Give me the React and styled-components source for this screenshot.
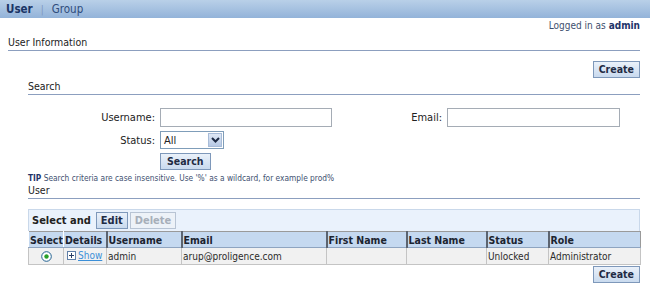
import styled, { createGlobalStyle } from 'styled-components';

const GlobalStyle = createGlobalStyle`
    body {
        margin: 0;
        background: #ffffff;
        font-family: "DejaVu Sans Condensed", "Liberation Sans", sans-serif;
        font-size: 10.5px;
        color: #222222;
    }
`;

const columns = [
    { key: 'select', label: 'Select', width: 35, plain: true },
    { key: 'details', label: 'Details', width: 43, plain: true },
    { key: 'username', label: 'Username', width: 75 },
    { key: 'email', label: 'Email', width: 145 },
    { key: 'first', label: 'First Name', width: 80 },
    { key: 'last', label: 'Last Name', width: 80 },
    { key: 'status', label: 'Status', width: 62 },
    { key: 'role', label: 'Role', width: 92 },
];

const App = () => {
    return (
        <Page>
            <GlobalStyle />
            <NavBar>
                <NavItem active>User</NavItem>
                <NavSep>|</NavSep>
                <NavItem>Group</NavItem>
            </NavBar>
            <Content>
                <LoggedIn>Logged in as <b>admin</b></LoggedIn>
                <SectionHeader top={3}>User Information</SectionHeader>
                <ButtonRow>
                    <Button>Create</Button>
                </ButtonRow>
                <Inner>
                    <SectionHeader top={2}>Search</SectionHeader>
                    <SearchGrid>
                        <Label>Username:</Label>
                        <TextInput />
                        <Label>Email:</Label>
                        <TextInput />
                        <Label>Status:</Label>
                        <Select>
                            <span>All</span>
                            <SelectArrow>
                                <svg width="9" height="6" viewBox="0 0 9 6">
                                    <path d="M1 1 L4.5 4.5 L8 1" fill="none" stroke="#1d2a44" strokeWidth="2" />
                                </svg>
                            </SelectArrow>
                        </Select>
                        <span />
                        <span />
                        <span />
                        <div><Button wide>Search</Button></div>
                    </SearchGrid>
                    <Tip><b>TIP</b> Search criteria are case insensitive. Use '%' as a wildcard, for example prod%</Tip>
                    <SectionHeader top={0}>User</SectionHeader>
                    <TableWrap>
                        <Toolbar>
                            <ToolbarTitle>Select and</ToolbarTitle>
                            <Button small>Edit</Button>
                            <Button small disabled>Delete</Button>
                        </Toolbar>
                        <Table>
                            <colgroup>
                                {columns.map((c) => <col key={c.key} style={{ width: c.width }} />)}
                            </colgroup>
                            <thead>
                                <tr>
                                    {columns.map((c) => <Th key={c.key} plain={c.plain}>{c.label}</Th>)}
                                </tr>
                            </thead>
                            <tbody>
                                <tr>
                                    <Td center>
                                        <Radio>
                                            <svg width="11" height="11" viewBox="0 0 11 11">
                                                <circle cx="5.5" cy="5.5" r="4.8" fill="#ffffff" stroke="#1f5f8f" strokeWidth="1" />
                                                <circle cx="5.5" cy="5.5" r="2.2" fill="#2aa02a" />
                                            </svg>
                                        </Radio>
                                    </Td>
                                    <Td>
                                        <ShowLink>
                                            <svg width="9" height="9" viewBox="0 0 9 9">
                                                <rect x="0.5" y="0.5" width="8" height="8" fill="#ffffff" stroke="#5f7fa8" />
                                                <path d="M2 4.5 H7 M4.5 2 V7" stroke="#2a3f66" strokeWidth="1" />
                                            </svg>
                                            <u>Show</u>
                                        </ShowLink>
                                    </Td>
                                    <Td>admin</Td>
                                    <Td>arup@proligence.com</Td>
                                    <Td />
                                    <Td />
                                    <Td>Unlocked</Td>
                                    <Td>Administrator</Td>
                                </tr>
                            </tbody>
                        </Table>
                    </TableWrap>
                    <ButtonRow tight>
                        <Button>Create</Button>
                    </ButtonRow>
                </Inner>
            </Content>
        </Page>
    );
};

const Page = styled.div`
    width: 650px;
    height: 284px;
    overflow: hidden;
`;

const NavBar = styled.div`
    height: 18px;
    display: flex;
    align-items: center;
    gap: 8px;
    padding-left: 6px;
    background: linear-gradient(#b9d0e8, #93b3d9);
    font-size: 11.5px;
`;

const NavItem = styled.span`
    color: ${(p) => (p.active ? '#1b3566' : '#2f4c7c')};
    font-weight: ${(p) => (p.active ? 'bold' : 'normal')};
`;

const NavSep = styled.span`
    color: #7d98bf;
    font-size: 10px;
`;

const Content = styled.div`
    padding: 0 10px 0 8px;
`;

const LoggedIn = styled.div`
    text-align: right;
    color: #3d4f6e;
    margin-top: 1px;
    height: 14px;
    line-height: 14px;
    font-size: 10px;

    b {
        color: #1f3468;
    }
`;

const SectionHeader = styled.div`
    color: #222222;
    line-height: 13px;
    margin-top: ${(p) => p.top}px;
    padding-bottom: 1px;
    border-bottom: 1px solid #8c9fbf;
`;

const ButtonRow = styled.div`
    display: flex;
    justify-content: flex-end;
    padding-top: ${(p) => (p.tight ? '1px' : '10px')};
`;

const Button = styled.button`
    font-family: inherit;
    font-size: ${(p) => (p.small ? '11px' : '10.5px')};
    font-weight: bold;
    color: ${(p) => (p.disabled ? '#a7afba' : '#1f2b44')};
    background: ${(p) => (p.disabled ? '#edf2f8' : 'linear-gradient(#eaf1fa, #c9daee)')};
    border: 1px solid ${(p) => (p.disabled ? '#b8c4d4' : '#7e98ba')};
    padding: 0 ${(p) => (p.small ? '4px' : p.wide ? '6px' : '5px')};
    height: 17px;
    line-height: 15px;
    margin: 0;
`;

const Inner = styled.div`
    padding-left: 20px;
`;

const SearchGrid = styled.div`
    display: grid;
    grid-template-columns: 127px 172px 105px 173px;
    column-gap: 5px;
    row-gap: 4px;
    align-items: center;
    margin-top: 13px;
`;

const Label = styled.span`
    text-align: right;
    font-size: 11px;
`;

const TextInput = styled.input`
    height: 19px;
    box-sizing: border-box;
    border: 1px solid #a5acb5;
    margin: 0;
    padding: 0;
`;

const Select = styled.div`
    width: 64px;
    height: 18px;
    box-sizing: border-box;
    border: 1px solid #7f9db9;
    display: flex;
    align-items: center;
    justify-content: space-between;
    padding-left: 3px;
    font-size: 11px;
`;

const SelectArrow = styled.span`
    width: 14px;
    height: 14px;
    margin-right: 1px;
    display: flex;
    align-items: center;
    justify-content: center;
    background: linear-gradient(#dfe8f5, #b6c8e4);
    border: 1px solid #a8bcd8;
    box-sizing: border-box;
`;

const Tip = styled.div`
    font-size: 8.3px;
    color: #3e5070;
    margin-top: 2px;
    line-height: 12px;

    b {
        color: #1f3468;
    }
`;

const TableWrap = styled.div`
    margin-top: 10px;
`;

const Toolbar = styled.div`
    height: 22px;
    box-sizing: border-box;
    display: flex;
    align-items: center;
    gap: 2px;
    padding-left: 3px;
    background: #eaf2fc;
    border: 1px solid #c9d8ea;
    border-bottom: none;
`;

const ToolbarTitle = styled.span`
    font-size: 11px;
    font-weight: bold;
    color: #222222;
    margin-right: 3px;
`;

const Table = styled.table`
    width: 100%;
    table-layout: fixed;
    border-collapse: collapse;
    border: 1px solid #9a9a9a;
`;

const Th = styled.th`
    height: 15px;
    padding: 0 1px;
    text-align: left;
    font-size: 10.5px;
    font-weight: bold;
    color: #1c2430;
    background: #c5d9f0;
    border-left: ${(p) => (p.plain ? '1px solid #ffffff' : '2px solid #5c6470')};
    border-bottom: 1px solid #8ea4c0;
    white-space: nowrap;
    overflow: hidden;
`;

const Td = styled.td`
    height: 16px;
    padding: 0 1px;
    background: #f1f1f1;
    border: 1px solid #c4c4c4;
    text-align: ${(p) => (p.center ? 'center' : 'left')};
    font-size: 10px;
    color: #2b2b2b;
    white-space: nowrap;
    overflow: hidden;
`;

const Radio = styled.span`
    display: inline-flex;
    vertical-align: middle;
`;

const ShowLink = styled.span`
    display: inline-flex;
    align-items: center;
    gap: 2px;
    color: #3b8fd8;
    padding-left: 2px;
`;

export default App;
